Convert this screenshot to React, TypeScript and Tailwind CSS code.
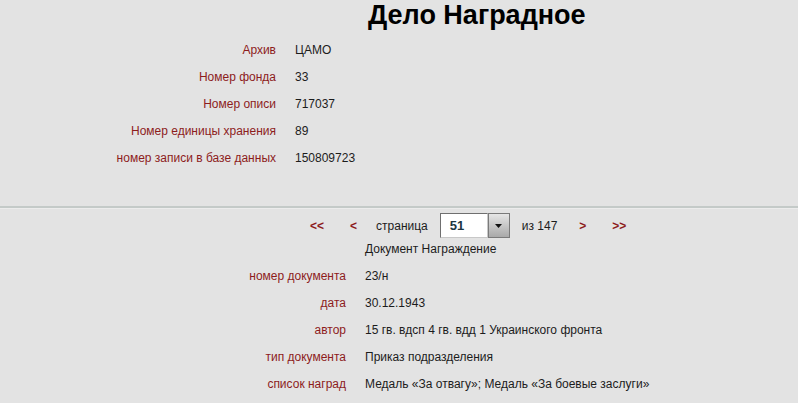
import React from "react";

const topRows = [
  ["Архив", "ЦАМО"],
  ["Номер фонда", "33"],
  ["Номер описи", "717037"],
  ["Номер единицы хранения", "89"],
  ["номер записи в базе данных", "150809723"],
];

const docRows = [
  ["номер документа", "23/н"],
  ["дата", "30.12.1943"],
  ["автор", "15 гв. вдсп 4 гв. вдд 1 Украинского фронта"],
  ["тип документа", "Приказ подразделения"],
  ["список наград", "Медаль «За отвагу»; Медаль «За боевые заслуги»"],
];

const font = { fontFamily: '"Liberation Sans", Arial, sans-serif' };

const App = () => {
  return (
    <div
      className="w-[798px] h-[403px] overflow-hidden bg-[#e3e3e3] text-[12px] text-[#1c1c1c]"
      style={font}
    >
      {/* header block */}
      <h1 className="pl-[368px] h-[30px] text-[27px] leading-[30px] font-bold text-black">
        Дело Наградное
      </h1>

      <div className="mt-[7px] grid grid-cols-[276px_1fr] gap-x-[19px]">
        {topRows.map(([label, value]) => (
          <React.Fragment key={label}>
            <div className="h-[27px] leading-[27px] text-right text-[#8d1c1c]">
              {label}
            </div>
            <div className="h-[27px] leading-[27px]">{value}</div>
          </React.Fragment>
        ))}
      </div>

      <div className="mt-[34px] border-t-2 border-[#c4cac8]">
        <div className="border-t border-[#ececec]" />
      </div>

      {/* pager */}
      <div className="mt-[4px] flex items-center h-[25px] pl-[310px]">
        <a href="#" className="font-bold text-[#8d1c1c]">&lt;&lt;</a>
        <a href="#" className="ml-[26px] font-bold text-[#8d1c1c]">&lt;</a>
        <span className="ml-[19px]">страница</span>
        <div className="ml-[12px] flex h-[25px]">
          <div className="w-[48px] h-[25px] bg-white border border-t-[#6f6f6f] border-l-[#6f6f6f] border-b-[#c8c8c8] border-r-[#c8c8c8] pl-[9px] leading-[23px] text-[13px] font-bold text-[#1c3642]">
            51
          </div>
          <div className="w-[22px] h-[25px] border border-[#7a7a7a] bg-gradient-to-b from-[#e6e6e6] to-[#a9a9a9] flex items-center justify-center">
            <svg width="7" height="4" viewBox="0 0 7 4">
              <path d="M0 0h7L3.5 4z" fill="#111" />
            </svg>
          </div>
        </div>
        <span className="ml-[12px]">из 147</span>
        <a href="#" className="ml-[22px] font-bold text-[#8d1c1c]">&gt;</a>
        <a href="#" className="ml-[26px] font-bold text-[#8d1c1c]">&gt;&gt;</a>
      </div>

      <div className="mt-[3px] pl-[365px] h-[16px] leading-[16px]">
        Документ Награждение
      </div>

      <div className="mt-[6px] grid grid-cols-[346px_1fr] gap-x-[19px]">
        {docRows.map(([label, value]) => (
          <React.Fragment key={label}>
            <div className="h-[27px] leading-[27px] text-right text-[#8d1c1c]">
              {label}
            </div>
            <div className="h-[27px] leading-[27px] whitespace-nowrap">{value}</div>
          </React.Fragment>
        ))}
      </div>
    </div>
  );
};

export default App;
